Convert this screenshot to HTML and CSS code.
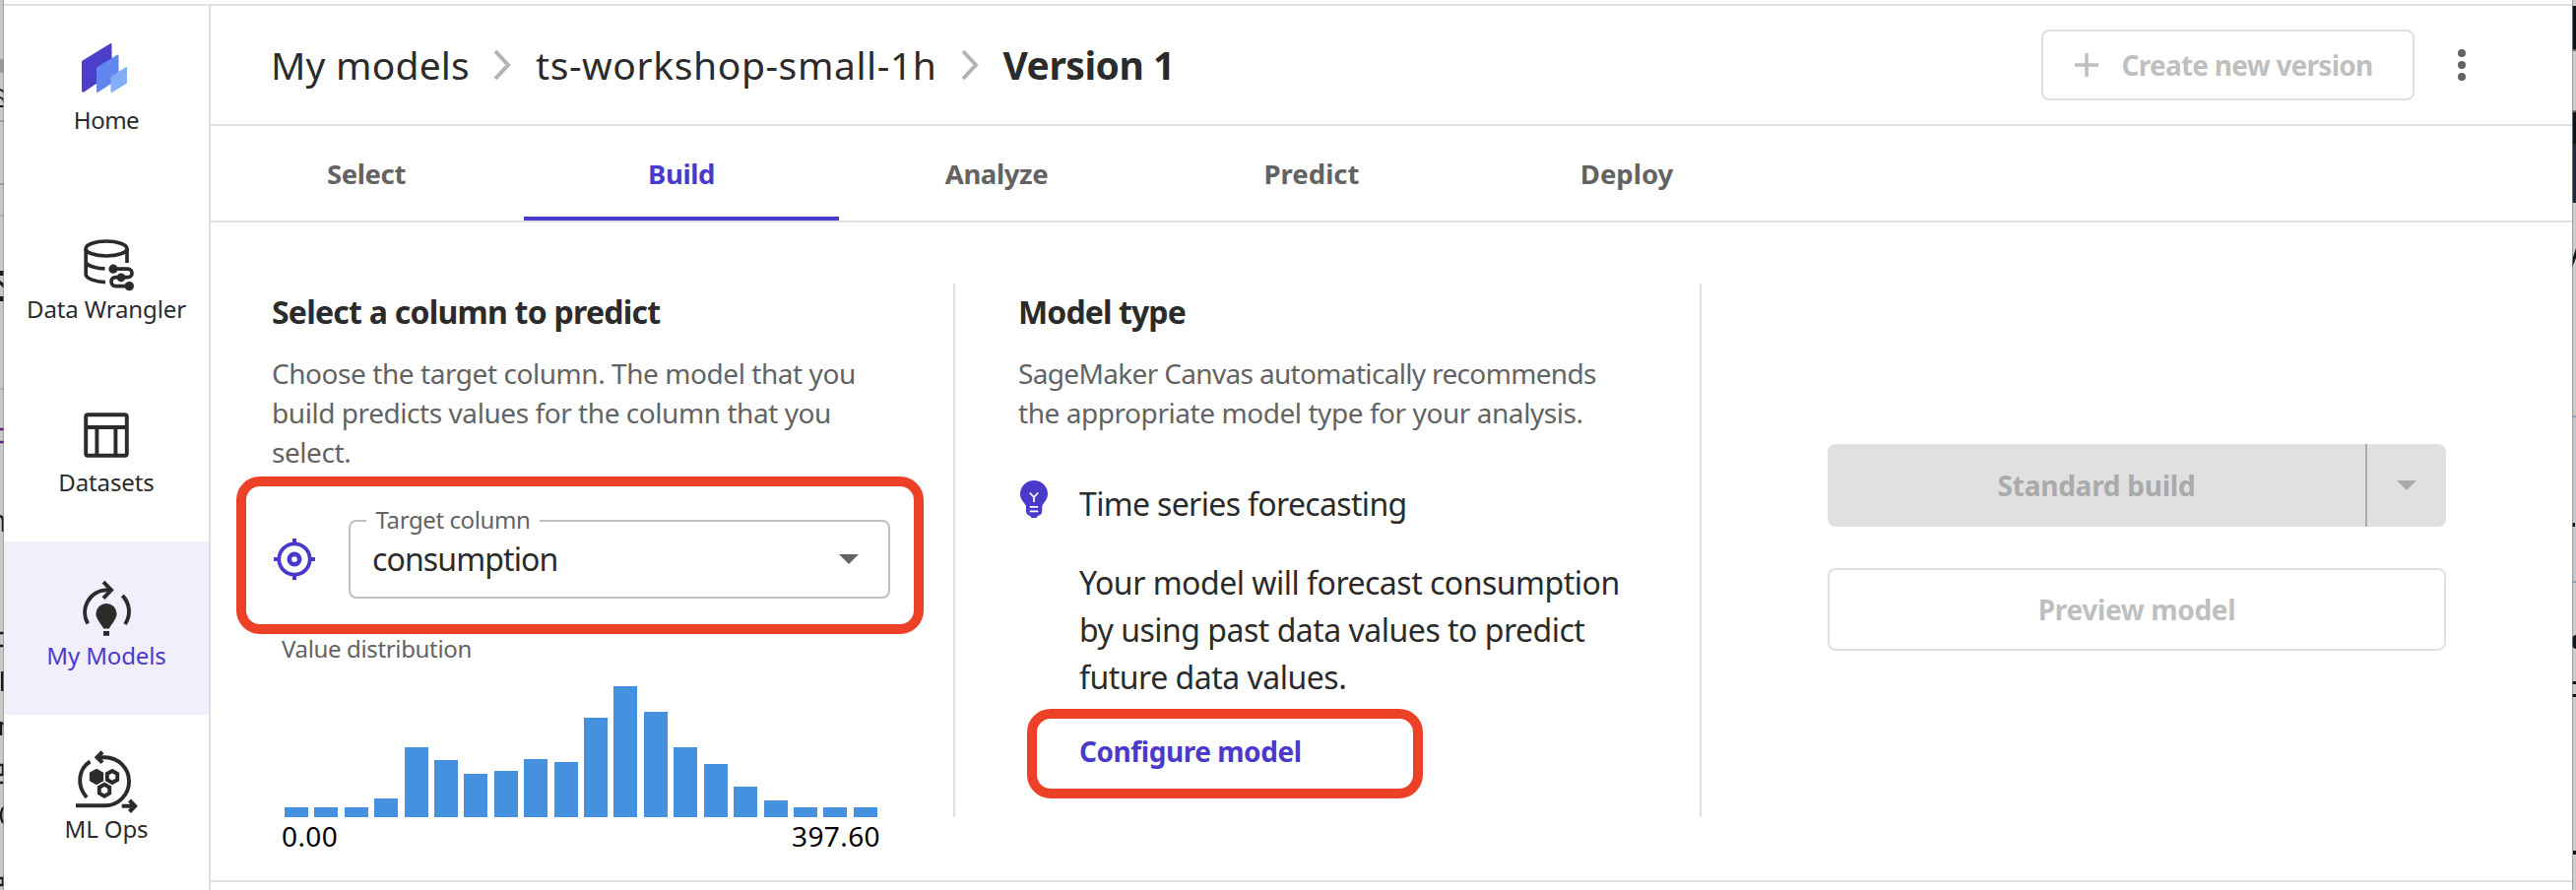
FILE: index.html
```
<!DOCTYPE html>
<html lang="en">
<head>
<meta charset="utf-8">
<title>ts-workshop-small-1h – Version 1</title>
<link rel="stylesheet" href="styles.css">
</head>
<body>
<svg class="edge" viewBox="0 0 4 904" aria-hidden="true">
  <rect width="4" height="904" fill="#c8c8c6"/>
  <path fill="#999" d="M0 60h4v14H0zM0 122h4v2H0zM0 186h4v2H0z"/>
  <path fill="#b0b0ae" d="M0 218h4v2H0zM0 394h4v2H0z"/>
  <path fill="none" stroke="#1b1b1b" stroke-width="2" d="M0 91q3 1 4 3M0 99q4 1 4 5M0 108h4"/>
  <path fill="#1b1b1b" d="M0 275h4v5H0zM0 285l4 3v5l-4-4zM0 301h4v5H0zM1 682h3v20H1z"/>
  <path fill="none" stroke="#5b2380" stroke-width="2.4" d="M0 436h4M0 449h4"/>
  <path fill="none" stroke="#1b1b1b" stroke-width="2.4" d="M0 524q3 1 3 5v11M0 643h4M0 656h4M1 733v14M0 735h4M0 777h3v10H0M0 795h3M4 820q-3 2-3 8t3 8M0 892h3v7H0"/>
  <rect x="3" width="1" height="904" fill="#8e8e8c" opacity=".7"/>
</svg>

<div class="app">
  <nav class="side">
    <a class="nav nav-home">
      <svg class="nav-icon" viewBox="72 34 72 72" stroke-linejoin="round" stroke-width="2">
        <path fill="#4a3ecb" stroke="#4a3ecb" d="M84 62.500 112.500 45V74L85 92.500H84z"/>
        <path fill="#6286ef" stroke="#6286ef" d="M99 69 119.500 56.500V79.500L99 93z"/>
        <path fill="#81aef6" stroke="#81aef6" d="M113.500 78.500 128 69V84L113.500 93z"/>
      </svg>
      <span>Home</span>
    </a>
    <a class="nav">
      <svg class="nav-icon" viewBox="72 226 72 72" fill="none" stroke="#2b2b2b" stroke-width="3.700">
        <ellipse cx="108" cy="252.500" rx="20.900" ry="7.500"/>
        <path d="M87.200 252.500V278.500C87.200 283 97 286.300 107 286.700M87.200 267C90 270.500 99 272.700 106.500 272.900M129 252.500V267"/>
        <path d="M115 273.200H129.500C135.500 273.200 135.500 281.600 129.500 281.600H117.500C111.500 281.600 111.500 290.600 117.500 290.600H131"/>
        <g fill="#2b2b2b" stroke="none"><circle cx="115" cy="273.200" r="4.600"/><circle cx="123" cy="281.800" r="4.400"/><circle cx="131.300" cy="290.600" r="4.700"/></g>
      </svg>
      <span>Data Wrangler</span>
    </a>
    <a class="nav">
      <svg class="nav-icon" viewBox="72 402 72 72" fill="none" stroke="#2b2b2b" stroke-width="3.900">
        <rect x="87.200" y="421.200" width="41.600" height="41.600" rx="2"/>
        <path d="M87 434H129M98.400 434V462M117.400 434V462"/>
      </svg>
      <span>Datasets</span>
    </a>
    <a class="nav nav-active">
      <svg class="nav-icon" viewBox="72 578 72 72" fill="none" stroke="#2b2b2b" stroke-width="3.900">
        <path d="M89.200 633.500A22.800 22.800 0 0 1 108 599.300H113M124.300 605A22.800 22.800 0 0 1 127 634"/>
        <path d="M105 591.200 113 599.300 105 607.600"/>
        <path fill="#2b2b2b" stroke="none" d="M108 613A10.600 10.600 0 0 1 118.600 623.500C118.600 629 112.500 634.500 111 638.400H105C103.500 634.500 97.400 629 97.400 623.500A10.600 10.600 0 0 1 108 613zM105 640.900H111V645.700H105z"/>
      </svg>
      <span>My Models</span>
    </a>
    <a class="nav">
      <svg class="nav-icon" viewBox="72 754 72 72" fill="none" stroke="#2b2b2b" stroke-width="3.900">
        <path d="M91.500 773.500C79.500 781 77.500 798 88 810M99 769.200H106.500A24.500 24.500 0 0 1 106.500 818.300H77M123.700 818.700H135"/>
        <path d="M104 763.800 98.700 769.200 104 774.600M131.500 813 137 818.700 131.500 824.500" stroke-width="4.200"/>
        <path fill="#2b2b2b" d="M98 783 103.200 786V792L98 795 92.800 792V786z"/>
        <path d="M114 783 119.200 786V792L114 795 108.800 792V786zM106 796.700 111.200 799.700V805.700L106 808.700 100.800 805.700V799.700z"/>
      </svg>
      <span>ML Ops</span>
    </a>
  </nav>

  <main class="main">
    <header class="head">
      <div class="crumbs">
        <span class="crumb">My models</span>
        <svg class="chev" viewBox="0 0 18 32"><path d="M2 2 15 16 2 30"/></svg>
        <span class="crumb crumb-model">ts-workshop-small-1h</span>
        <svg class="chev" viewBox="0 0 18 32"><path d="M2 2 15 16 2 30"/></svg>
        <span class="crumb crumb-here">Version 1</span>
      </div>
      <button class="btn-outline create">
        <svg class="plus" viewBox="0 0 24 24"><path d="M12 0V24M0 12H24"/></svg>
        <span>Create new version</span>
      </button>
      <svg class="kebab" viewBox="0 0 8 32"><circle cx="4" cy="4" r="4"/><circle cx="4" cy="16" r="4"/><circle cx="4" cy="28" r="4"/></svg>
    </header>

    <div class="tabs">
      <a class="tab">Select</a>
      <a class="tab tab-on">Build</a>
      <a class="tab">Analyze</a>
      <a class="tab tab-wide">Predict</a>
      <a class="tab tab-wide">Deploy</a>
    </div>

    <div class="content">
      <section class="col col-target">
        <h2 class="title">Select a column to predict</h2>
        <p class="desc">Choose the target column. The model that you<br>build predicts values for the column that you<br>select.</p>
        <div class="pick">
          <svg class="target" viewBox="0 0 42 42"><circle cx="21" cy="21" r="15.700" stroke-width="3.800"/><circle cx="21" cy="21" r="5.200" stroke-width="4.700"/><path stroke-width="4" d="M21 0V6M21 36V42M0 21H6M36 21H42"/></svg>
          <div class="select">
            <span class="select-label">Target column</span>
            <span class="select-value">consumption</span>
            <svg class="caret" viewBox="0 0 20 10"><path d="M0 0H20L10 10z"/></svg>
          </div>
          <div class="mark mark-target"></div>
        </div>
        <div class="dist">
          <div class="dist-title">Value distribution</div>
          <div class="bars">
            <i style="height:10px"></i><i style="height:10px"></i><i style="height:10px"></i><i style="height:19px"></i><i style="height:70.700px"></i><i style="height:58px"></i><i style="height:44px"></i><i style="height:47.500px"></i><i style="height:58.700px"></i><i style="height:55.600px"></i><i style="height:101.400px"></i><i style="height:133px"></i><i style="height:107.400px"></i><i style="height:71px"></i><i style="height:54px"></i><i style="height:30.700px"></i><i style="height:17px"></i><i style="height:10px"></i><i style="height:10px"></i><i style="height:10px"></i>
          </div>
          <div class="range"><span>0.00</span><span>397.60</span></div>
        </div>
      </section>
      <div class="rule"></div>
      <section class="col col-type">
        <h2 class="title title-type">Model type</h2>
        <p class="desc"><span class="tight">SageMaker Canvas automatically recommends</span><br>the appropriate model type for your analysis.</p>
        <div class="type">
          <svg class="bulb" viewBox="1034 486 32 42"><path fill="#4a3acb" d="M1050 488A14 14 0 0 1 1064 502C1064 507 1060.500 509.500 1058.300 514V519Q1058.300 523 1054 524L1052.500 526H1047.500L1046 524Q1042 523 1042 519V514C1039.500 509.500 1036 507 1036 502A14 14 0 0 1 1050 488z"/><path fill="none" stroke="#fff" stroke-width="1.800" d="M1045.800 500.500 1050 505 1054.200 500.500M1050 505V510M1045.800 514.800H1054.200M1045.800 519.300H1054.200"/></svg>
          <div class="type-body">
            <div class="type-name">Time series forecasting</div>
            <p class="type-text">Your model will forecast consumption<br>by using past data values to predict<br>future data values.</p>
            <a class="configure">Configure model<span class="mark mark-configure"></span></a>
          </div>
        </div>
      </section>
      <div class="rule"></div>
      <section class="col-actions">
        <div class="split">
          <button class="split-main">Standard build</button>
          <button class="split-more" aria-label="More"><svg class="caret" viewBox="0 0 20 10"><path d="M0 0H20L10 10z"/></svg></button>
        </div>
        <button class="btn-outline preview">Preview model</button>
      </section>
    </div>
  </main>
</div>

<svg class="edge" viewBox="0 0 4 904" aria-hidden="true">
  <rect width="4" height="904" fill="#cbcdcc"/>
  <path fill="#0f1316" d="M0 6h4v44H0zM0 114h4v32H0z"/>
  <path fill="#1e2a38" d="M0 146h4v60H0z"/>
  <path fill="#6b6b6b" d="M0 50h4v2H0zM0 112h4v2H0z"/>
  <path fill="#c0c8ce" d="M0 422h4v168H0z"/>
  <path fill="#8aa5c0" d="M0 422h4v2H0zM0 590h4v2H0z"/>
  <path fill="#14171a" d="M0 264l4-12v10l-4 10zM0 531h3v4H0zM4 645a5 7 0 0 0 0 14zM0 692h4v3H0zM0 705h4v3H0zM1 864h3v4H1z"/>
  <rect width="1" height="904" fill="#8e8e8c" opacity=".7"/>
</svg>
</body>
</html>
```
FILE: styles.css
```
* { box-sizing: border-box; }
body {
  margin: 0;
  display: flex;
  width: 2616px;
  height: 904px;
  overflow: hidden;
  background: #fff;
  color: #2b2b2b;
  font-family: "Noto Sans", "Open Sans", sans-serif;
}
h2, p { margin: 0; }
button { font: inherit; padding: 0; border: 0; }
svg { display: block; flex: none; }

.edge { width: 4px; height: 904px; }
.app {
  flex: 1;
  display: flex;
  margin-top: 4px;
  border-top: 2px solid #e0e0e0;
}

/* Sidebar */
.side { width: 210px; flex: none; border-right: 2px solid #e0e0e0; }
.nav {
  display: flex;
  flex-direction: column;
  align-items: center;
  height: 176px;
  padding-top: 28px;
  font-size: 24px;
  line-height: 32px;
  letter-spacing: -.12px;
  white-space: nowrap;
}
.nav-home { margin-bottom: 16px; letter-spacing: -.5px; }
.nav-icon { width: 72px; height: 72px; }
.nav-active { background: #f1effb; color: #4a3acb; }

.main { flex: 1; min-width: 0; }

/* Header */
.head {
  display: flex;
  align-items: center;
  height: 122px;
  padding: 0 108px 0 61px;
  border-bottom: 2px solid #e0e0e0;
}
.crumbs { display: flex; align-items: center; font-size: 39px; line-height: 56px; white-space: nowrap; }
.crumb { letter-spacing: .2px; }
.crumb-model { letter-spacing: .6px; }
.crumb-here { letter-spacing: -.5px; font-weight: 700; }
.chev { width: 18px; height: 32px; margin: 0 25px 0 24px; }
.chev path { fill: none; stroke: #b3b3b3; stroke-width: 4; }
.btn-outline {
  display: flex;
  align-items: center;
  justify-content: center;
  border: 2px solid #e0e0e0;
  border-radius: 8px;
  background: #fff;
  color: #bfbfbf;
  font-size: 28px;
  font-weight: 700;
  white-space: nowrap;
}
.create { width: 379px; height: 72px; margin-left: auto; gap: 24px; padding-right: 9px; letter-spacing: -.76px; }
.plus { width: 24px; height: 24px; }
.plus path { stroke: #bfbfbf; stroke-width: 3.5; }
.kebab { width: 8px; height: 32px; margin-left: 44px; fill: #636363; }

/* Tabs */
.tabs { display: flex; height: 98px; margin-left: -2px; border-bottom: 2px solid #e0e0e0; }
.tab {
  width: 320px;
  padding-top: 29px;
  border-bottom: 4px solid transparent;
  font-size: 27.5px;
  line-height: 40px;
  font-weight: 700;
  letter-spacing: -.4px;
  text-align: center;
  color: #636363;
}
.tab-on { color: #4a3acb; border-color: #4a3acb; }
.tab-wide { letter-spacing: 0; }

/* Build panel */
.content { display: flex; height: 670px; padding-top: 62px; border-bottom: 2px solid #e0e0e0; }
.rule { width: 2px; height: 542px; background: #e0e0e0; flex: none; }
.col { padding-top: 5px; flex: none; }
.col-target { width: 754px; padding-left: 62px; }
.col-type { width: 756px; padding-left: 64px; }
.title { font-size: 32px; line-height: 48px; letter-spacing: -.76px; white-space: nowrap; }
.title-type { letter-spacing: -.9px; }
.desc { margin-top: 18px; font-size: 28px; line-height: 40px; letter-spacing: -.44px; color: #636363; white-space: nowrap; }
.tight { letter-spacing: -.66px; }

.pick { position: relative; display: flex; align-items: center; margin-top: 49px; }
.target { width: 42px; height: 42px; margin: 0 34px 0 2px; fill: none; stroke: #4a3acb; }
.select {
  position: relative;
  display: flex;
  align-items: center;
  justify-content: space-between;
  width: 550px;
  height: 80px;
  padding: 0 30px 0 22px;
  border: 2px solid #bfbfbf;
  border-radius: 8px;
}
.select-label {
  position: absolute;
  left: 16px;
  top: -18px;
  width: 176px;
  text-align: center;
  background: #fff;
  color: #636363;
  font-size: 24px;
  line-height: 32px;
  letter-spacing: -.41px;
}
.select-value { font-size: 32px; line-height: 48px; letter-spacing: -.89px; }
.caret { width: 20px; height: 10px; fill: #636363; }
.mark { position: absolute; border: 10px solid #ec4127; border-radius: 24px; pointer-events: none; }
.mark-target { left: -36px; top: -44px; width: 698px; height: 160px; }

.dist { margin: 35px 0 0 10px; width: 608px; }
.dist-title { font-size: 24px; line-height: 32px; letter-spacing: -.35px; color: #636363; }
.bars { display: flex; align-items: flex-end; justify-content: space-between; height: 155px; padding: 0 3px; }
.bars i { width: 24px; background: #4691df; }
.range { display: flex; justify-content: space-between; margin-top: -1px; font-size: 28px; line-height: 40px; letter-spacing: .4px; color: #000; }

.type { display: flex; margin-top: 49px; }
.bulb { width: 32px; height: 42px; margin: -2px 30px 0 0; }
.type-body { font-size: 32px; line-height: 48px; letter-spacing: -.5px; white-space: nowrap; }
.type-name { letter-spacing: -.66px; }
.type-text { margin-top: 32px; }
.configure {
  position: relative;
  display: inline-block;
  margin-top: 31px;
  font-size: 28px;
  line-height: 40px;
  font-weight: 700;
  letter-spacing: -.45px;
  color: #4a3acb;
}
.mark-configure { left: -53px; top: -23px; width: 402px; height: 91px; }

.col-actions { width: 756px; padding: 163px 0 0 128px; }
.split { display: flex; width: 628px; height: 84px; border-radius: 8px; overflow: hidden; background: #e0e0e0; }
.split-main { flex: 1; padding-bottom: 1px; background: none; color: #aaa; font-size: 28px; font-weight: 700; letter-spacing: -.25px; }
.split-more { display: flex; align-items: center; justify-content: center; width: 82px; border-left: 2px solid #aaa; background: none; }
.split-more .caret { fill: #aaa; }
.preview { width: 628px; height: 84px; margin-top: 42px; padding-bottom: 1px; letter-spacing: -.33px; }
```
